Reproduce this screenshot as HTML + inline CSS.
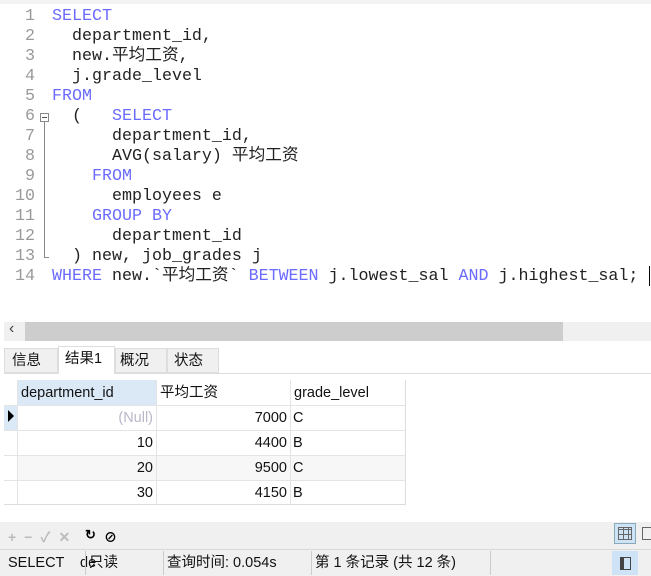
<!DOCTYPE html>
<html><head><meta charset="utf-8"><style>
body{margin:0;width:651px;height:575px;overflow:hidden;background:#fff;position:relative;font-family:"Liberation Sans","Noto Sans CJK SC",sans-serif;}
.code{position:absolute;left:0;top:7px;font-family:"Liberation Mono","Noto Sans CJK SC",monospace;font-size:16.67px;line-height:20px;}
.ln{position:absolute;left:0;width:35px;text-align:right;color:#999;height:20px}
.l{position:absolute;left:52px;white-space:pre;color:#222;height:20px}
.k{color:#6b6bff}
.a{position:absolute;font-size:14.5px;line-height:18px;color:#111;white-space:pre}
</style></head><body>
<div style="position:absolute;left:0;top:0;width:651px;height:4px;background:#f3f3f3"></div>
<div class="code">
<div class="ln" style="top:0">1</div><div class="l" style="top:0"><span class="k">SELECT</span></div>
<div class="ln" style="top:20px">2</div><div class="l" style="top:20px">  department_id,</div>
<div class="ln" style="top:40px">3</div><div class="l" style="top:40px">  new.平均工资,</div>
<div class="ln" style="top:60px">4</div><div class="l" style="top:60px">  j.grade_level</div>
<div class="ln" style="top:80px">5</div><div class="l" style="top:80px"><span class="k">FROM</span></div>
<div class="ln" style="top:100px">6</div><div class="l" style="top:100px">  (   <span class="k">SELECT</span></div>
<div class="ln" style="top:120px">7</div><div class="l" style="top:120px">      department_id,</div>
<div class="ln" style="top:140px">8</div><div class="l" style="top:140px">      AVG(salary) 平均工资</div>
<div class="ln" style="top:160px">9</div><div class="l" style="top:160px">    <span class="k">FROM</span></div>
<div class="ln" style="top:180px">10</div><div class="l" style="top:180px">      employees e</div>
<div class="ln" style="top:200px">11</div><div class="l" style="top:200px">    <span class="k">GROUP BY</span></div>
<div class="ln" style="top:220px">12</div><div class="l" style="top:220px">      department_id</div>
<div class="ln" style="top:240px">13</div><div class="l" style="top:240px">  ) new, job_grades j</div>
<div class="ln" style="top:260px">14</div><div class="l" style="top:260px"><span class="k">WHERE</span> new.`平均工资` <span class="k">BETWEEN</span> j.lowest_sal <span class="k">AND</span> j.highest_sal;</div>
</div>
<div style="position:absolute;left:40px;top:113px;width:7px;height:7px;border:1px solid #888;background:#fff"></div>
<div style="position:absolute;left:42px;top:117px;width:5px;height:1px;background:#555"></div>
<div style="position:absolute;left:44px;top:122px;width:1px;height:135px;background:#888"></div>
<div style="position:absolute;left:44px;top:257px;width:5px;height:1px;background:#888"></div>
<div style="position:absolute;left:649px;top:266px;width:1px;height:20px;background:#000"></div>
<!-- scrollbar -->
<div style="position:absolute;left:4px;top:322px;width:647px;height:19px;background:#f0f0f0"></div>
<div style="position:absolute;left:25px;top:322px;width:538px;height:19px;background:#cdcdcd"></div>
<div style="position:absolute;left:9px;top:320px;font-size:16px;color:#444">‹</div>
<!-- tabs -->
<div style="position:absolute;left:4px;top:373px;width:647px;height:1px;background:#ddd"></div>
<div style="position:absolute;left:4px;top:348px;width:54px;height:25px;background:#f0f0f0;border:1px solid #ddd;box-sizing:border-box"></div>
<div style="position:absolute;left:58px;top:346px;width:57px;height:28px;background:#fff;border:1px solid #ddd;border-bottom:none;box-sizing:border-box"></div>
<div style="position:absolute;left:115px;top:348px;width:52px;height:25px;background:#f0f0f0;border:1px solid #ddd;box-sizing:border-box"></div>
<div style="position:absolute;left:167px;top:348px;width:52px;height:25px;background:#f0f0f0;border:1px solid #ddd;box-sizing:border-box"></div>
<div class="a" style="left:12px;top:352px">信息</div>
<div class="a" style="left:65px;top:350px">结果1</div>
<div class="a" style="left:120px;top:352px">概况</div>
<div class="a" style="left:174px;top:352px">状态</div>
<!-- table -->
<div style="position:absolute;left:4px;top:380px;width:402px;height:125px;border-right:1px solid #ddd;border-bottom:1px solid #ddd;box-sizing:border-box"></div>
<div style="position:absolute;left:17px;top:380px;width:139px;height:25px;background:#dbe9f7"></div>
<div style="position:absolute;left:4px;top:405px;width:13px;height:25px;background:#dbe9f7"></div>
<div style="position:absolute;left:17px;top:455px;width:388px;height:25px;background:#f7f7f7"></div>
<div style="position:absolute;left:4px;top:405px;width:402px;height:1px;background:#e4e4e4"></div>
<div style="position:absolute;left:4px;top:430px;width:402px;height:1px;background:#e4e4e4"></div>
<div style="position:absolute;left:4px;top:455px;width:402px;height:1px;background:#e4e4e4"></div>
<div style="position:absolute;left:4px;top:480px;width:402px;height:1px;background:#e4e4e4"></div>
<div style="position:absolute;left:17px;top:380px;width:1px;height:125px;background:#e4e4e4"></div>
<div style="position:absolute;left:156px;top:380px;width:1px;height:125px;background:#e4e4e4"></div>
<div style="position:absolute;left:290px;top:380px;width:1px;height:125px;background:#e4e4e4"></div>
<div style="position:absolute;left:8px;top:410px;width:0;height:0;border-left:6px solid #000;border-top:6px solid transparent;border-bottom:6px solid transparent"></div>
<div class="a" style="left:21px;top:384px">department_id</div>
<div class="a" style="left:160px;top:384px">平均工资</div>
<div class="a" style="left:294px;top:384px">grade_level</div>
<div class="a" style="left:17px;width:136px;text-align:right;top:409px;color:#b8b8c8">(Null)</div>
<div class="a" style="left:17px;width:136px;text-align:right;top:434px">10</div>
<div class="a" style="left:17px;width:136px;text-align:right;top:459px">20</div>
<div class="a" style="left:17px;width:136px;text-align:right;top:484px">30</div>
<div class="a" style="left:157px;width:130px;text-align:right;top:409px">7000</div>
<div class="a" style="left:157px;width:130px;text-align:right;top:434px">4400</div>
<div class="a" style="left:157px;width:130px;text-align:right;top:459px">9500</div>
<div class="a" style="left:157px;width:130px;text-align:right;top:484px">4150</div>
<div class="a" style="left:293px;top:409px">C</div>
<div class="a" style="left:293px;top:434px">B</div>
<div class="a" style="left:293px;top:459px">C</div>
<div class="a" style="left:293px;top:484px">B</div>
<!-- bottom toolbar -->
<div style="position:absolute;left:0;top:522px;width:651px;height:28px;background:#f0f0f0"></div>
<div style="position:absolute;left:8px;top:527px;font-size:14px;color:#bbb;font-weight:bold;letter-spacing:8px">+−✓✕</div>
<div style="position:absolute;left:85px;top:527px;font-size:13px;font-weight:bold">↻</div>
<div style="position:absolute;left:104px;top:527px;font-size:13px;font-weight:bold">⊘</div>
<div style="position:absolute;left:614px;top:523px;width:22px;height:21px;background:#cfe3f7;border:1px solid #8ab;box-sizing:border-box"></div>
<div style="position:absolute;left:618px;top:527px;width:14px;height:13px;border:1px solid #666;box-sizing:border-box;background:repeating-linear-gradient(90deg,transparent 0 4px,#666 4px 5px),repeating-linear-gradient(0deg,transparent 0 4px,#666 4px 5px)"></div>
<div style="position:absolute;left:642px;top:527px;width:12px;height:13px;border:1px solid #666;box-sizing:border-box"></div>
<!-- status bar -->
<div style="position:absolute;left:0;top:549px;width:651px;height:26px;background:#f0f0f0;border-top:1px solid #d8d8d8"></div>
<div class="a" style="left:8px;top:554px">SELECT</div>
<div class="a" style="left:80px;top:554px;width:22px;overflow:hidden">de</div>
<div style="position:absolute;left:85px;top:551px;width:1px;height:24px;background:#ccc"></div>
<div style="position:absolute;left:163px;top:551px;width:1px;height:24px;background:#ccc"></div>
<div style="position:absolute;left:311px;top:551px;width:1px;height:24px;background:#ccc"></div>
<div style="position:absolute;left:490px;top:551px;width:1px;height:24px;background:#ccc"></div>
<div class="a" style="left:89px;top:554px">只读</div>
<div class="a" style="left:167px;top:554px">查询时间: 0.054s</div>
<div class="a" style="left:315px;top:554px">第 1 条记录 (共 12 条)</div>
<div style="position:absolute;left:612px;top:551px;width:26px;height:24px;background:#cfe3f7"></div>
<div style="position:absolute;left:620px;top:557px;width:11px;height:13px;border:1px solid #444;box-sizing:border-box;border-left-width:4px"></div>
</body></html>
